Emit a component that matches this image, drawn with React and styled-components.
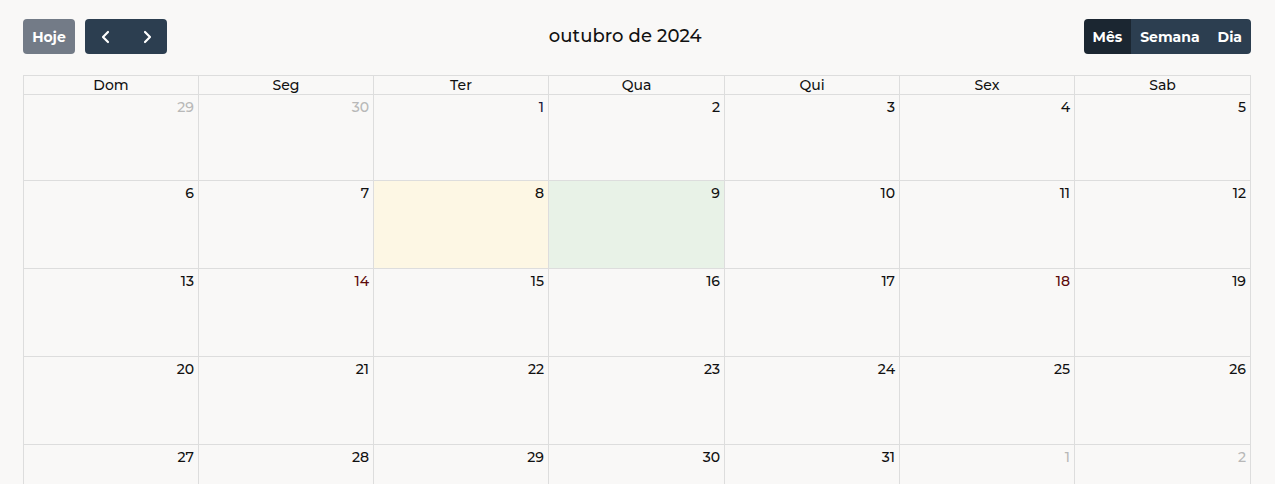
import React from "react";
import styled, { createGlobalStyle } from "styled-components";

const Global = createGlobalStyle`
  html, body { margin: 0; padding: 0; background: #f9f8f7; }
  body { font-family: "Montserrat", "Lato", "Open Sans", sans-serif; color: #111; overflow: hidden; }
`;

const Page = styled.div`
  padding: 19px 24px 0 23px;
`;

const Toolbar = styled.div`
  display: flex;
  justify-content: space-between;
  align-items: center;
  height: 35px;
  margin-bottom: 21px;
`;

const Group = styled.div`
  display: flex;
  gap: ${p => p.$gap || 0}px;
`;

const Joined = styled.div`
  display: flex;
  border-radius: 4px;
  overflow: hidden;
`;

const Btn = styled.button`
  height: 35px;
  border: none;
  margin: 0;
  padding: 0 ${p => p.$px ?? 10}px;
  background: ${p => p.$bg};
  color: #fff;
  font-family: inherit;
  font-weight: 700;
  font-size: 14px;
  border-radius: ${p => p.$round ? "4px" : "0"};
  display: flex;
  align-items: center;
  justify-content: center;
  width: ${p => p.$w ? p.$w + "px" : "auto"};
`;

const Title = styled.h2`
  margin: 0 0 2px 0;
  font-size: 18px;
  font-weight: 500;
  letter-spacing: 0.1px;
  color: #111;
`;

const Grid = styled.div`
  display: grid;
  grid-template-columns: 175px 175px 175px 176px 175px 175px 176px;
  grid-template-rows: 19px 86px repeat(4, 88px);
  border-left: 1px solid #ddd;
  border-top: 1px solid #ddd;
  width: max-content;
`;

const Head = styled.div`
  border-right: 1px solid #ddd;
  border-bottom: 1px solid #ddd;
  font-size: 14px;
  font-weight: 500;
  text-align: center;
  line-height: 18px;
  min-width: 0;
`;

const Cell = styled.div`
  border-right: 1px solid #ddd;
  border-bottom: 1px solid #ddd;
  background: ${p => p.$bg || "transparent"};
  display: flex;
  justify-content: flex-end;
  padding: 4px 4px 0 0;
  min-width: 0;
`;

const Num = styled.span`
  font-size: 14px;
  font-weight: 500;
  line-height: 17px;
  color: ${p => p.$c || "#111"};
`;

const Chev = ({ dir }) => (
  <svg width="16" height="16" viewBox="0 0 16 16" fill="none" stroke="#fff" strokeWidth="2.2" strokeLinecap="round" strokeLinejoin="round">
    {dir === "l" ? <path d="M10 3 L5 8 L10 13" /> : <path d="M6 3 L11 8 L6 13" />}
  </svg>
);

const days = ["Dom", "Seg", "Ter", "Qua", "Qui", "Sex", "Sab"];

const cells = [];
[29, 30].forEach(d => cells.push({ d, other: true }));
for (let d = 1; d <= 31; d++) cells.push({ d });
[1, 2].forEach(d => cells.push({ d, other: true }));

export default function App() {
  return (
    <Page>
      <Global />
      <Toolbar>
        <Group $gap={10}>
          <Btn $bg="#737b87" $round $w={52}>Hoje</Btn>
          <Joined>
            <Btn $bg="#2c3e50" $w={41}><Chev dir="l" /></Btn>
            <Btn $bg="#2c3e50" $w={41}><Chev dir="r" /></Btn>
          </Joined>
        </Group>
        <Title>outubro de 2024</Title>
        <Group>
          <Joined>
            <Btn $bg="#1b2631" $px={9}>Mês</Btn>
            <Btn $bg="#2c3e50" $px={9}>Semana</Btn>
            <Btn $bg="#2c3e50" $px={9}>Dia</Btn>
          </Joined>
        </Group>
      </Toolbar>
      <Grid>
        {days.map(d => <Head key={d}>{d}</Head>)}
        {cells.map((c, i) => {
          let bg;
          if (!c.other && c.d === 8) bg = "#fdf7e4";
          if (!c.other && c.d === 9) bg = "#e8f2e7";
          let col;
          if (c.other) col = "#b8b8b8";
          else if (c.d === 14 || c.d === 18) col = "#5c0a0a";
          else if (c.d === 1) col = "#1a1a40";
          return (
            <Cell key={i} $bg={bg}>
              <Num $c={col}>{c.d}</Num>
            </Cell>
          );
        })}
      </Grid>
    </Page>
  );
}
